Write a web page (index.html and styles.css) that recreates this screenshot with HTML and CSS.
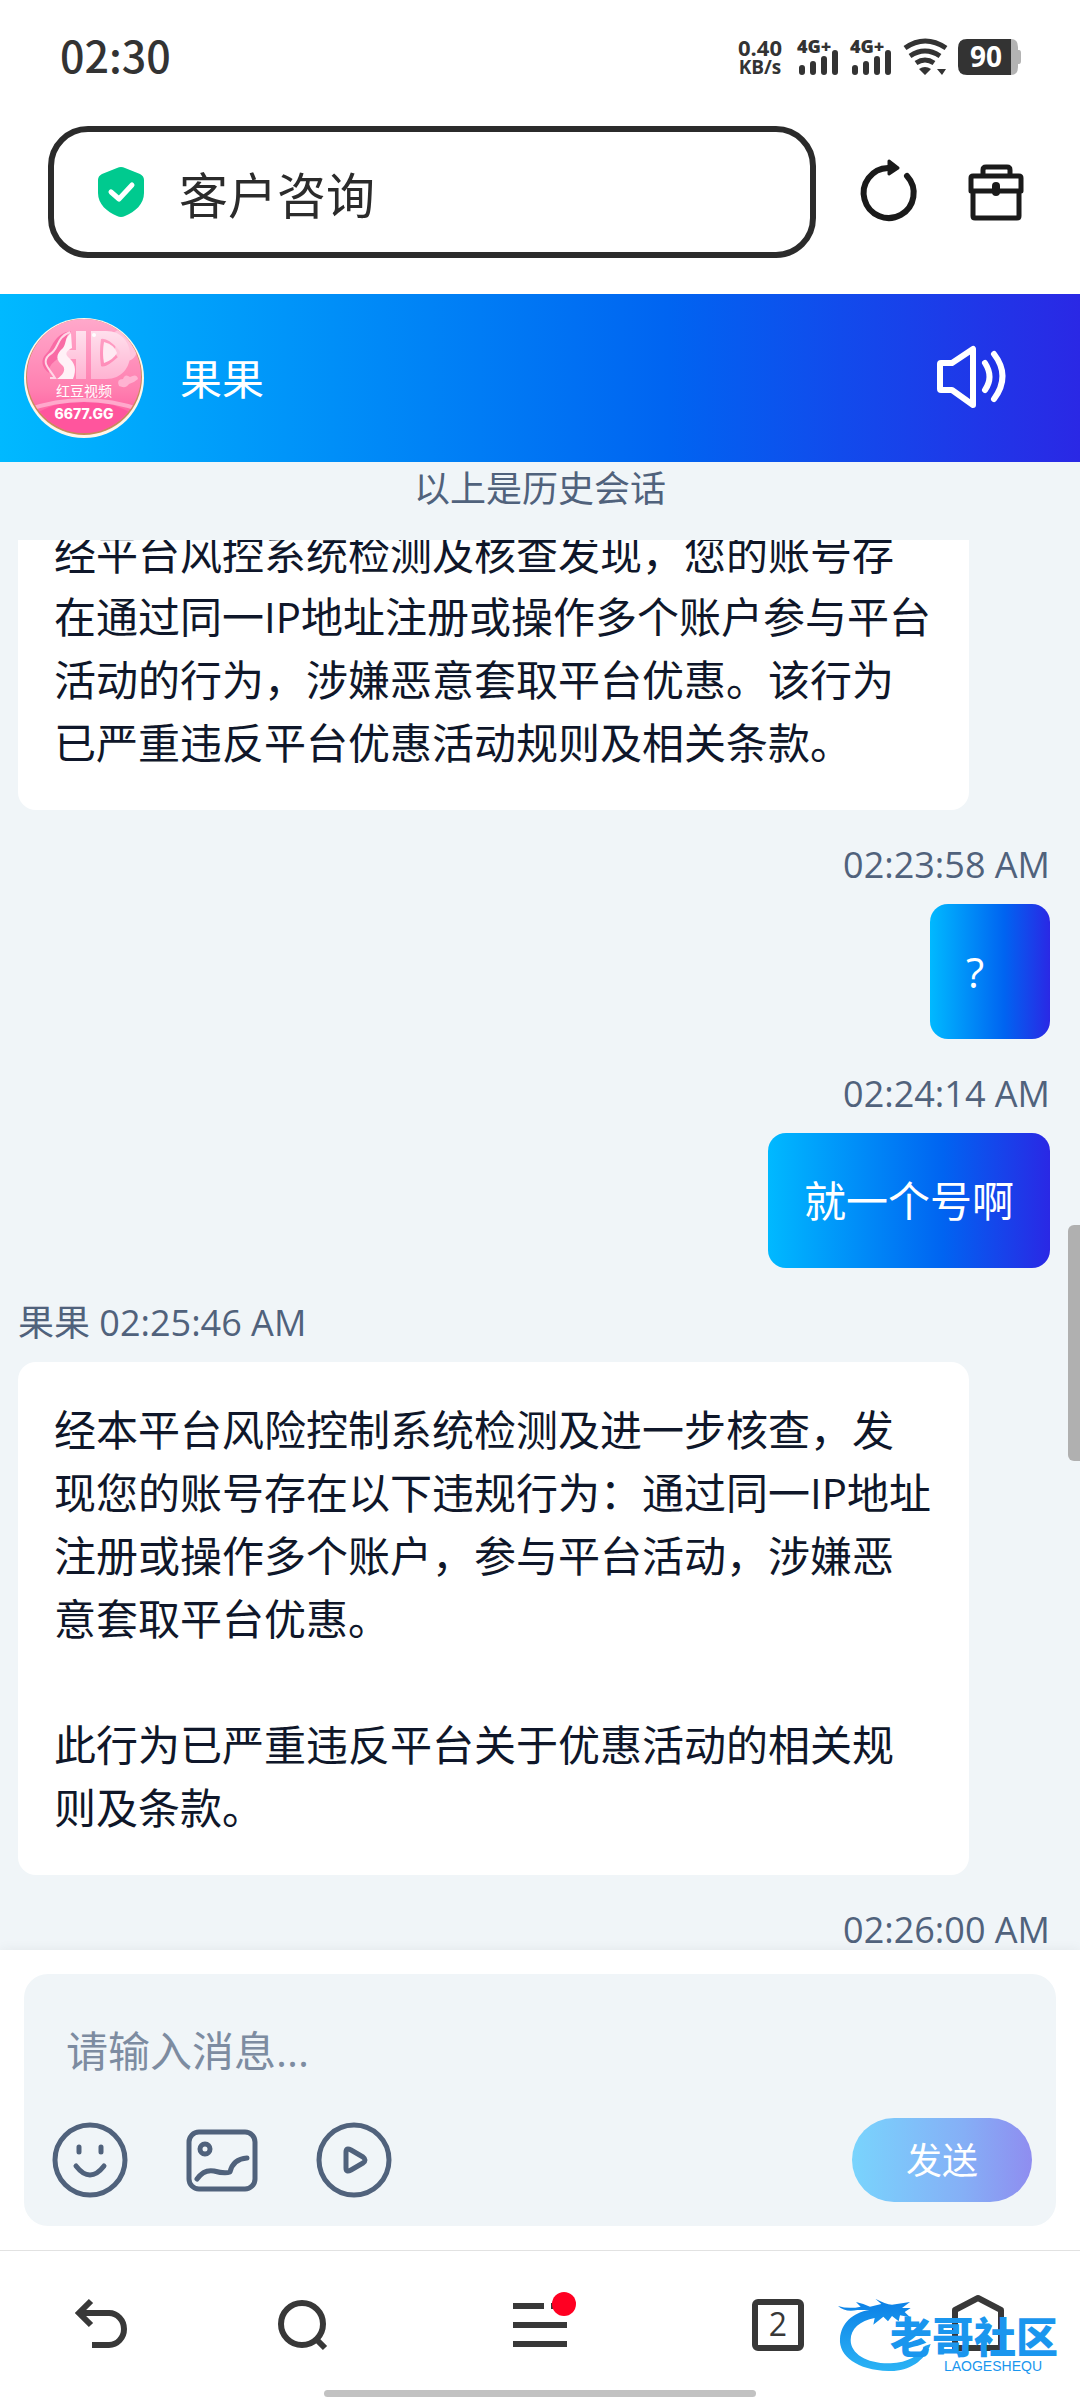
FILE: index.html
```html
<!DOCTYPE html>
<html lang="zh-CN">
<head>
    <meta charset="UTF-8">
    <meta name="viewport" content="width=device-width, initial-scale=1.0">
    <title>客户咨询</title>
    <link rel="stylesheet" href="styles.css">
</head>
<body>
    <!-- 状态栏 -->
    <div class="status-bar">
        <span class="clock">02:30</span>
        <div class="status-icons">
            <div class="net-speed">
                <span>0.40</span>
                <span class="unit">KB/s</span>
            </div>
            <svg class="signal" width="44" height="36" viewBox="0 0 44 36">
                <text x="0" y="14">4G+</text>
                <path d="M5 29v4M16 25v8M27 20v13M38 14v19" />
            </svg>
            <svg class="signal" width="44" height="36" viewBox="0 0 44 36">
                <text x="0" y="14">4G+</text>
                <path d="M5 29v4M16 25v8M27 20v13M38 14v19" />
            </svg>
            <svg class="wifi" width="46" height="36" viewBox="0 0 46 36">
                <path class="wave" d="M2 9Q22 -5 43 9M7 17Q22 7 37 17M13 24Q22 18 31 24" />
                <path d="M16 30Q22 26 28 30L22 36zM34 30h9l-4 6z" />
            </svg>
            <svg class="battery" width="64" height="36" viewBox="0 0 64 36">
                <path class="battery-rest" d="M50 0h3q7 0 7 8v3h1q2 0 2 3v8q0 3-2 3h-1v3q0 8-7 8h-3z" />
                <path class="battery-level" d="M9 0h44v36H9q-9 0-9-9V9q0-9 9-9z" />
                <text x="28" y="28">90</text>
            </svg>
        </div>
    </div>

    <!-- 地址栏 -->
    <div class="url-bar">
        <label class="url-box">
            <svg width="46" height="50" viewBox="0 0 46 50">
                <path fill="#00ca8f" d="M19 1q4-2 8 0l15 6q4 2 4 6v13c0 11-9 19-19 23q-4 2-8 0C9 45 0 37 0 26V13q0-4 4-6z" />
                <path d="M13 25l8 7 13-14" fill="none" stroke="#fff" stroke-width="5" stroke-linecap="round" stroke-linejoin="round" />
            </svg>
            <input type="text" class="url-title" value="客户咨询" aria-label="地址" readonly>
        </label>
        <button class="icon-btn" aria-label="刷新">
            <svg width="60" height="64" viewBox="0 0 60 64">
                <path d="M30 8A25 25 0 1 0 49 16" fill="none" stroke="#1a1a1a" stroke-width="6" stroke-linecap="round" />
                <path d="M31 1l9 7-9 6z" fill="#1a1a1a" stroke="#1a1a1a" stroke-width="3" stroke-linejoin="round" />
            </svg>
        </button>
        <button class="icon-btn" aria-label="工具箱">
            <svg width="60" height="64" viewBox="0 0 60 64" fill="none" stroke="#1a1a1a" stroke-width="5" stroke-linejoin="round">
                <path d="M17 14V10q0-3 3-3h21q3 0 3 3v4" />
                <path d="M5 31V18q0-2 2-2h46q2 0 2 2v13z" />
                <path d="M7 31v25q0 2 2 2h42q2 0 2-2V31" />
                <path d="M30 26v6" stroke-width="8" stroke-linecap="round" />
            </svg>
        </button>
    </div>

    <!-- 客服信息 -->
    <header class="agent-bar">
        <svg class="avatar" width="120" height="120" viewBox="0 0 120 120">
            <defs>
                <linearGradient id="pink" x1="0" y1="0" x2="0" y2="1">
                    <stop offset="0" stop-color="#ffa9cb" />
                    <stop offset="0.6" stop-color="#ff7fb0" />
                    <stop offset="1" stop-color="#ff4a97" />
                </linearGradient>
                <linearGradient id="letter" x1="0" y1="0" x2="0" y2="1">
                    <stop offset="0" stop-color="#ffe0ed" />
                    <stop offset="1" stop-color="#ffb3d2" />
                </linearGradient>
                <clipPath id="disc"><circle cx="60" cy="58" r="57" /></clipPath>
            </defs>
            <circle cx="60" cy="60" r="60" fill="#fff6e9" />
            <circle cx="60" cy="59" r="58" fill="#c98a5c" />
            <g clip-path="url(#disc)">
                <rect width="120" height="120" fill="url(#pink)" />
                <circle cx="102" cy="32" r="11" fill="#ffc4dc" />
                <circle cx="96" cy="20" r="8" fill="#ffc4dc" />
                <ellipse cx="60" cy="118" rx="62" ry="35" fill="#ff559d" />
                <path d="M-2 94Q60 70 122 94" fill="none" stroke="#ffb8d5" stroke-width="4" opacity="0.8" />
                <path d="M52 13h10v48H52V41H42v-9h10z" fill="url(#letter)" />
                <path fill="url(#letter)" fill-rule="evenodd" d="M67 13h15c32 0 32 48 0 48H67zM77 21q-2 14 0 27 4 3 17-9 4-4 0-8-11-12-17-10z" />
                <path d="M80 24q11 3 13 11-4 7-13 10-2-10 0-21z" fill="#ffe9f2" />
                <path d="M47 13C29 16 29 30 22 36c-6 6-4 14 3 19-1-11 11-13 15-22 3-7 0-14 7-20z" fill="#f96ba5" />
                <path d="M46 14C31 20 36 31 25 37c-8 8 0 13 6 23h-5" fill="none" stroke="#ffd6e6" stroke-width="2" />
                <path d="M47 15c-7 6-4 9-8 15-8 7-7 12 0 18 3 4 0 9-6 13h16c4-10 2-16-5-22-4-4 0-7 4-9z" fill="#fff1f7" />
                <path d="M95 68q-3-7 4-7 2-6 7-2 7-4 8 2-3 3-9 5-3 5-10 2z" fill="#ffb3d2" />
                <circle cx="70" cy="17" r="2" fill="#fff" />
            </g>
            <text class="avatar-name" x="60" y="78">红豆视频</text>
            <text class="avatar-site" x="60" y="101">6677.GG</text>
        </svg>
        <h1 class="agent-name">果果</h1>
        <button class="icon-btn" aria-label="声音">
            <svg width="72" height="64" viewBox="0 0 72 64" fill="none" stroke="#fff" stroke-width="6" stroke-linecap="round" stroke-linejoin="round">
                <path d="M4 18q0-1 1-1h11L37 3v56L16 44H5q-1 0-1-1z" />
                <path d="M49 17q9 14 0 27M58 8q17 22 0 45" />
            </svg>
        </button>
    </header>

    <p class="history-tip">以上是历史会话</p>

    <!-- 聊天记录 -->
    <main class="chat">
        <div class="message-list">
            <div class="message agent">
                <div class="bubble">经平台风控系统检测及核查发现，您的账号存在通过同一IP地址注册或操作多个账户参与平台活动的行为，涉嫌恶意套取平台优惠。该行为已严重违反平台优惠活动规则及相关条款。</div>
            </div>
            <div class="message user">
                <div class="time">02:23:58 AM</div>
                <div class="bubble">?</div>
            </div>
            <div class="message user">
                <div class="time">02:24:14 AM</div>
                <div class="bubble">就一个号啊</div>
            </div>
            <div class="message agent">
                <div class="time">果果 02:25:46 AM</div>
                <div class="bubble">经本平台风险控制系统检测及进一步核查，发现您的账号存在以下违规行为：通过同一IP地址注册或操作多个账户，参与平台活动，涉嫌恶意套取平台优惠。<br><br>此行为已严重违反平台关于优惠活动的相关规则及条款。</div>
            </div>
            <div class="message user">
                <div class="time">02:26:00 AM</div>
            </div>
        </div>
        <div class="scroll-thumb"></div>
    </main>

    <!-- 输入框 -->
    <div class="composer">
        <form class="composer-box">
            <textarea class="composer-input" rows="1" placeholder="请输入消息..." aria-label="消息"></textarea>
            <div class="composer-tools">
                <button type="button" class="icon-btn" aria-label="表情">
                    <svg class="tool" width="84" height="84" viewBox="0 0 84 84">
                        <circle cx="42" cy="42" r="35" />
                        <path d="M31 29v5M53 29v5M28 48q14 18 28 0" />
                    </svg>
                </button>
                <button type="button" class="icon-btn" aria-label="图片">
                    <svg class="tool" width="84" height="84" viewBox="0 0 84 84">
                        <rect x="9" y="14" width="66" height="57" rx="10" />
                        <circle cx="25" cy="31" r="5" />
                        <path d="M17 61Q24 51 34 53Q45 56 50 54Q53 41 67 40" />
                    </svg>
                </button>
                <button type="button" class="icon-btn" aria-label="视频">
                    <svg class="tool" width="84" height="84" viewBox="0 0 84 84">
                        <circle cx="42" cy="42" r="35" />
                        <path d="M34 34Q34 29 39 32L51 39Q55 42 51 45L39 52Q34 55 34 50z" />
                    </svg>
                </button>
                <button type="submit" class="send-btn">发送</button>
            </div>
        </form>
    </div>

    <!-- 底部导航 -->
    <nav class="bottom-nav">
        <button class="icon-btn" aria-label="返回">
            <svg class="nav-icon" width="60" height="60" viewBox="0 0 60 60">
                <path d="M19 6L7 18l12 12M8 18h29a15 16 0 0 1 0 32H20" />
            </svg>
        </button>
        <button class="icon-btn" aria-label="搜索">
            <svg class="nav-icon" width="60" height="60" viewBox="0 0 60 60">
                <circle cx="30" cy="29" r="21" />
                <path d="M44 44l9 9" />
            </svg>
        </button>
        <button class="icon-btn menu-btn" aria-label="菜单">
            <svg class="nav-icon" width="60" height="60" viewBox="0 0 60 60">
                <path d="M3 11h31M41 11h5M3 30h54M3 49h54" />
            </svg>
            <span class="red-dot"></span>
        </button>
        <button class="icon-btn" aria-label="标签页"><span class="tab-count">2</span></button>
        <button class="icon-btn" aria-label="主页">
            <svg class="nav-icon" width="60" height="60" viewBox="0 0 60 60" stroke-linejoin="round">
                <path d="M7 53V15L30 3l23 12v38z" />
            </svg>
        </button>
        <div class="watermark">
            <svg width="260" height="120" viewBox="0 0 780 360">
                <defs>
                    <linearGradient id="dragon" x1="0" y1="0" x2="0" y2="1">
                        <stop offset="0" stop-color="#0b7fe6" />
                        <stop offset="1" stop-color="#2bb3f5" />
                    </linearGradient>
                </defs>
                <path fill="url(#dragon)" d="M332 192C314 246 262 276 205 273 112 270 56 228 60 176 63 130 98 98 148 90L112 90Q76 98 54 78 86 88 122 80L108 66Q134 72 150 80L184 72 166 56Q196 72 216 74L270 66 246 84 272 84 254 96 270 112 240 106 236 124 216 108 204 124 190 110 160 134 164 114C120 122 92 146 92 180 92 222 142 252 212 250 262 248 300 226 314 198z" />
            </svg>
            <span class="watermark-name">老哥社区</span>
            <span class="watermark-pinyin">LAOGESHEQU</span>
        </div>
        <div class="home-indicator"></div>
    </nav>
</body>
</html>
```

FILE: styles.css
```css
* {
    box-sizing: border-box;
}
body {
    display: flex;
    flex-direction: column;
    height: 100vh;
    margin: 0;
    background: #fff;
    color: #0f172a;
    font-family: "Open Sans", "Noto Sans CJK SC", sans-serif;
    font-size: 42px;
    line-height: 63px;
}
button, input, textarea {
    padding: 0;
    border: 0;
    background: none;
    color: inherit;
    font: inherit;
    outline: none;
}
svg {
    display: block;
    flex-shrink: 0;
    overflow: visible;
}
.icon-btn {
    display: flex;
    align-items: center;
    justify-content: center;
}

/* 状态栏 */
.status-bar {
    display: flex;
    align-items: center;
    justify-content: space-between;
    height: 114px;
    padding: 0 58px 0 60px;
    color: #333;
}
.clock {
    padding-bottom: 6px;
    font-family: "Noto Sans CJK SC", sans-serif;
    font-size: 43px;
    font-weight: 500;
}
.status-icons {
    display: flex;
    align-items: center;
    gap: 9px;
}
.net-speed {
    display: flex;
    flex-direction: column;
    align-items: center;
    margin-right: 6px;
    font-size: 22px;
    font-weight: 700;
    line-height: 20px;
}
.net-speed .unit {
    font-size: 19px;
}
.signal text {
    fill: #333;
    font-size: 18px;
    font-weight: 800;
}
.signal path {
    fill: none;
    stroke: #333;
    stroke-width: 6;
    stroke-linecap: round;
}
.wifi {
    fill: #333;
}
.wifi .wave {
    fill: none;
    stroke: #333;
    stroke-width: 5;
}
.battery-rest {
    fill: #b3b3b3;
}
.battery-level {
    fill: #333;
}
.battery text {
    fill: #fff;
    font-size: 28px;
    font-weight: 700;
    text-anchor: middle;
}

/* 地址栏 */
.url-bar {
    display: flex;
    align-items: center;
    gap: 42px;
    padding: 12px 54px 36px 48px;
}
.url-box {
    display: flex;
    flex: 1;
    align-items: center;
    gap: 35px;
    min-width: 0;
    height: 132px;
    padding: 0 44px;
    border: 6px solid #2b2b2b;
    border-radius: 40px;
}
.url-title {
    flex: 1;
    min-width: 0;
    height: 72px;
    color: #2b2b2b;
    font-size: 49px;
}
.url-bar .icon-btn + .icon-btn {
    margin-left: 6px;
}

/* 客服信息 */
.agent-bar {
    display: flex;
    align-items: center;
    height: 168px;
    padding: 0 72px 0 24px;
    background: linear-gradient(90deg, #00b9ff, #0064f1 62%, #2a28e5);
    color: #fff;
}
.agent-name {
    flex: 1;
    margin: 0 0 0 36px;
    font-size: 42px;
    font-weight: 400;
}
.avatar text {
    fill: #fff;
    text-anchor: middle;
}
.avatar-name {
    font-size: 14px;
}
.avatar-site {
    font-family: Inter, sans-serif;
    font-size: 14px;
    font-weight: 800;
}
.history-tip {
    height: 78px;
    margin: 0;
    background: #f0f5f8;
    color: #50627c;
    font-size: 36px;
    line-height: 54px;
    text-align: center;
}

/* 聊天记录 */
.chat {
    position: relative;
    flex: 1;
    min-height: 0;
    overflow: hidden;
    background: #f0f5f8;
}
.message-list {
    margin-top: -54px;
    padding: 0 30px 0 18px;
}
.message {
    display: flex;
    flex-direction: column;
    align-items: flex-start;
}
.message.user {
    align-items: flex-end;
}
.time {
    margin: 28px 0 12px;
    color: #50627c;
    font-size: 36px;
    line-height: 54px;
}
.bubble {
    padding: 36px;
    border-radius: 18px;
}
.agent .bubble {
    margin-right: 81px;
    padding-right: 34px;
    background: #fff;
}
.user .bubble {
    min-width: 120px;
    background: linear-gradient(90deg, #00b9ff, #0064f1 62%, #2a28e5);
    color: #fff;
}
.scroll-thumb {
    position: absolute;
    top: 685px;
    right: 0;
    width: 12px;
    height: 236px;
    border-radius: 6px 0 0 6px;
    background: #b0b0b0;
}

/* 输入框 */
.composer {
    position: relative;
    padding: 24px;
    background: #fff;
    box-shadow: 0 0 12px rgba(0, 0, 0, 0.06);
}
.composer-box {
    display: flex;
    flex-direction: column;
    justify-content: space-between;
    height: 252px;
    padding: 45px 24px 24px;
    border-radius: 24px;
    background: #f0f5f8;
}
.composer-input {
    width: 100%;
    height: 63px;
    padding: 0 18px;
    resize: none;
    overflow: hidden;
}
.composer-input::placeholder {
    color: #7d8ca1;
    opacity: 1;
}
.composer-tools {
    display: flex;
    align-items: center;
    gap: 48px;
}
.tool {
    fill: none;
    stroke: #50627c;
    stroke-width: 5;
    stroke-linecap: round;
    stroke-linejoin: round;
}
.send-btn {
    width: 180px;
    height: 84px;
    margin-left: auto;
    border-radius: 42px;
    background: linear-gradient(90deg, #79d4fd, #85aff6 62%, #8f8df0);
    color: #fff;
    font-size: 36px;
}

/* 底部导航 */
.bottom-nav {
    position: relative;
    display: grid;
    grid-template-columns: 51fr 49fr 70fr 49fr 51fr;
    height: 150px;
    padding-bottom: 2px;
    border-top: 1px solid #e2e2e2;
    background: #fff;
}
.nav-icon {
    fill: none;
    stroke: #383838;
    stroke-width: 6;
}
.menu-btn {
    position: relative;
}
.red-dot {
    position: absolute;
    top: 41px;
    left: calc(50% + 12px);
    width: 24px;
    height: 24px;
    border-radius: 50%;
    background: #ff0022;
}
.tab-count {
    width: 52px;
    height: 52px;
    border: 6px solid #383838;
    border-radius: 6px;
    color: #383838;
    font-family: "Open Sans", sans-serif;
    font-size: 32px;
    font-weight: 500;
    line-height: 38px;
}
.watermark {
    position: absolute;
    right: 0;
    bottom: 0;
    pointer-events: none;
}
.watermark-name,
.watermark-pinyin {
    position: absolute;
    color: #1a96ee;
    white-space: nowrap;
}
.watermark-name {
    top: 34px;
    right: 22px;
    font-family: "Noto Sans CJK SC", sans-serif;
    font-size: 42px;
    font-weight: 900;
    line-height: 42px;
}
.watermark-pinyin {
    right: 38px;
    bottom: 26px;
    font-family: "Liberation Sans", sans-serif;
    font-size: 14px;
    line-height: 16px;
}
.home-indicator {
    position: absolute;
    bottom: 3px;
    left: 30%;
    width: 40%;
    height: 7px;
    border-radius: 4px;
    background: #c2c2c2;
}
```
